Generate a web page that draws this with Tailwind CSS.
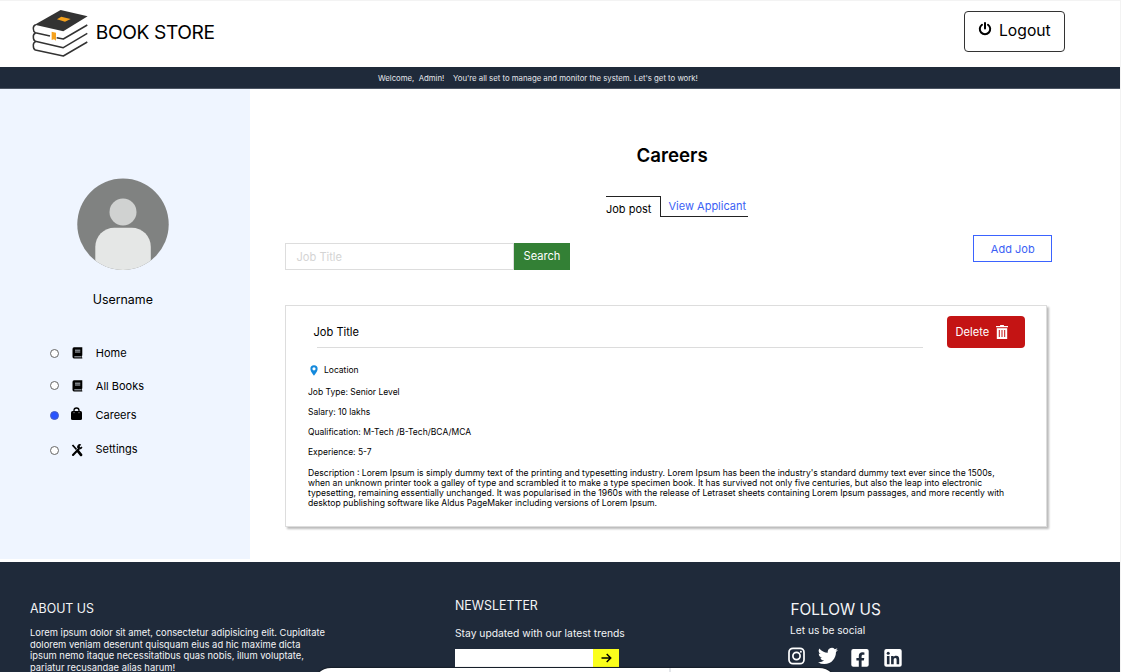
<!DOCTYPE html>
<html lang="en">
<head>
<meta charset="utf-8">
<title>Book Store</title>
<script src="https://cdn.jsdelivr.net/npm/@tailwindcss/browser@4"></script>
</head>
<body class="bg-white font-['Inter',sans-serif] text-black whitespace-nowrap overflow-hidden">
<div class="relative w-[1121px] h-[672px] overflow-hidden border-t border-r border-[#f3f3f3] flex flex-col">

  <header class="h-[66px] shrink-0 flex items-start justify-between pl-8 pr-[55.5px]">
    <div class="flex items-start">
      <svg class="mt-[7px] w-[57.3px] h-[50.7px]" viewBox="96 24 172 152" fill="none">
        <path d="M182 30L263 49L190 94L104 74Z" fill="#333"/>
        <path d="M184 50L212 57L195 65L171 58Z" fill="#f5a11c"/>
        <g stroke="#333" stroke-width="4.5" stroke-linejoin="round">
          <path d="M107 74Q99 77 100 86Q100 95 106 98L150 108M170 113L190 117L262 75"/>
          <path d="M107 99Q99 102 100 111Q100 121 106 124L190 143L262 100"/>
          <path d="M107 125Q99 128 100 137Q100 147 106 150L190 168L262 126"/>
        </g>
        <path d="M155 95L168 98V122L162 118L155 120Z" fill="#f5a11c"/>
      </svg>
      <h1 class="ml-[6.5px] mt-[19px] text-[19.2px] leading-6 tracking-[-0.4px]">BOOK STORE</h1>
    </div>
    <button class="mt-[10px] w-[100.5px] h-[41px] rounded-[4px] border border-[#333] flex items-start pl-[13px]">
      <svg class="mt-[10px] w-[14px] h-[14px]" viewBox="0 0 14 14" fill="none" stroke="#000" stroke-width="2" stroke-linecap="round"><path d="M7 1v5.5M4 2.8a5.2 5.2 0 1 0 6 0"/></svg>
      <span class="ml-[7px] mt-[9px] text-[15.7px] leading-5">Logout</span>
    </button>
  </header>

  <div class="h-[22px] shrink-0 bg-[#1f2a3a] border-b border-[#4c5563] pl-[378px] text-[7.78px] leading-[22px] text-gray-200 whitespace-pre">Welcome,  Admin!    You're all set to manage and monitor the system. Let's get to work!</div>

  <main class="h-[473px] shrink-0 flex">
    <aside class="w-[250px] h-[470px] bg-[#eff5ff]">
      <svg class="ml-[76.5px] mt-[89px] w-[92px] h-[92px]" viewBox="0 0 92 92">
        <defs><clipPath id="face"><circle cx="46" cy="46.3" r="45.7"/></clipPath></defs>
        <g clip-path="url(#face)"><rect width="92" height="92" fill="#808281"/><circle cx="46" cy="34" r="13.5" fill="#d0d2d1"/><rect x="18.3" y="49.8" width="55.5" height="70" rx="19" fill="#e5e7e6"/></g>
      </svg>
      <p class="ml-[92.7px] mt-[19.5px] text-[12.4px] leading-5">Username</p>
      <nav class="mt-[33.5px] text-[11px]">
        <div class="h-5 flex items-center pl-[50px]"><i class="w-[9px] h-[9px] rounded-full border border-[#666] bg-white"></i>
          <svg class="ml-[12.5px] w-[11px] h-[12px]" viewBox="0 0 11 12"><path d="M2 .3H10.3V8.5L9.7 9V10.5H10.3V11.5H2Q.5 11.5.5 9.7V2Q.5.3 2 .3Z"/><path d="M3 3.2H8.3M3 5H8.3M2.3 9.8H9" stroke="#cbd2dc" stroke-width=".9"/></svg>
          <span class="ml-[13.3px]">Home</span></div>
        <div class="mt-[12.5px] h-5 flex items-center pl-[50px]"><i class="w-[9px] h-[9px] rounded-full border border-[#666] bg-white"></i>
          <svg class="ml-[12.5px] w-[11px] h-[12px]" viewBox="0 0 11 12"><path d="M2 .3H10.3V8.5L9.7 9V10.5H10.3V11.5H2Q.5 11.5.5 9.7V2Q.5.3 2 .3Z"/><path d="M3 3.2H8.3M3 5H8.3M2.3 9.8H9" stroke="#cbd2dc" stroke-width=".9"/></svg>
          <span class="ml-[13.3px] mt-px">All Books</span></div>
        <div class="mt-[9.5px] h-5 flex items-center pl-[50px]"><i class="w-[9px] h-[9px] rounded-full border border-[#4a5fc0] bg-[#2954ff]"></i>
          <svg class="ml-[12px] mb-[3px] w-[11px] h-[13px]" viewBox="0 0 11 13"><rect y="4" width="11" height="9" rx="1.5"/><path d="M3 6V3.5a2.5 2.5 0 0 1 5 0V6" fill="none" stroke="#000" stroke-width="1.3"/><path d="M3 5v1.2M8 5v1.2" stroke="#bbb" stroke-width=".7"/></svg>
          <span class="ml-[13.5px]">Careers</span></div>
        <div class="mt-[14.5px] h-5 flex items-center pl-[50px]"><i class="mt-px w-[9px] h-[9px] rounded-full border border-[#666] bg-white"></i>
          <svg class="ml-[12px] w-[12px] h-[14px]" viewBox="0 0 12 14" fill="none" stroke="#000"><path d="M1.5 2L5.5 6.5" stroke-width="1.8"/><path d="M7 8.2L10 11.8" stroke-width="2.8" stroke-linecap="round"/><path d="M2 12L7.5 6.2" stroke-width="2.1" stroke-linecap="round"/><path d="M9.5 1.6A2.2 2.2 0 1 0 11 4L9.5 4.7L8.2 3.5Z" fill="#000"/></svg>
          <span class="ml-[12.5px] mb-px">Settings</span></div>
      </nav>
    </aside>

    <section class="w-[870px] pl-[35px]">
      <h2 class="mt-[54.5px] ml-[351.5px] text-[18.7px] leading-6 font-semibold">Careers</h2>
      <div class="mt-[28px] ml-[321px] h-[21px] flex text-[11px]">
        <span class="w-[54.5px] border-t border-r border-[#222] leading-[25px]">Job post</span>
        <span class="w-[87.5px] border-b border-[#222] pl-2 leading-[20px] text-[#3b5ff5]">View Applicant</span>
      </div>
      <div class="mt-[18.5px] flex items-start">
        <div class="mt-[8px] w-[229px] h-[26.5px] border border-[#ddd] pl-[10.5px] text-[11.1px] leading-[26px] text-[#d4d4d4]">Job Title</div>
        <button class="mt-[8px] w-[56px] h-[26.5px] bg-[#338035] text-white text-[11.1px] leading-[27.5px]">Search</button>
        <button class="ml-[403px] w-[78.5px] h-[27px] border border-[#3b63ff] text-[#3b5ff5] text-[11px] leading-[26.5px] pl-px">Add Job</button>
      </div>
      <article class="mt-[35.5px] w-[762px] h-[222px] border border-[#ddd] shadow-[1.5px_1.5px_2px_#bbb] text-[8.5px]">
        <div class="flex items-start pl-[27px] text-[11.1px]">
          <div class="w-[633.5px]"><h3 class="ml-[.5px] mt-[15px] leading-[22px]">Job Title</h3><div class="ml-[4px] mt-[4px] w-[606px] h-px bg-[#dcdcdc]"></div></div>
          <button class="mt-[10px] w-[78px] h-8 rounded-[4px] bg-[#c41414] text-white flex items-center pl-[9px]">Delete
            <svg class="ml-[7px] w-[12px] h-[14px]" viewBox="0 0 12 14" fill="#fff"><path d="M4 .5Q4 0 4.5 0h3Q8 0 8 .5V1h4v1.3H0V1H4Z"/><path d="M.8 3.2H11.2V14H.8Z"/><path d="M3.3 5v7M6 5v7M8.7 5v7" stroke="#c41414"/></svg>
          </button>
        </div>
        <div class="pl-[22px]">
          <p class="mt-[12px] h-5 flex items-center"><svg class="ml-[1.5px] w-[8px] h-[11px]" viewBox="0 0 8 11" fill="#1489dc"><path fill-rule="evenodd" d="M4 .3A3.6 3.6 0 0 0 .4 4C.4 6.6 4 10.7 4 10.7S7.6 6.6 7.6 4A3.6 3.6 0 0 0 4 .3M4 2.2a1.6 1.6 0 1 1 0 3.2a1.6 1.6 0 0 1 0-3.2"/></svg><span class="ml-[6.5px]">Location</span></p>
          <p class="mt-[1.5px] leading-5">Job Type: Senior Level</p>
          <p class="leading-[20.5px]">Salary: 10 lakhs</p>
          <p class="leading-5">Qualification: M-Tech /B-Tech/BCA/MCA</p>
          <p class="leading-5">Experience: 5-7</p>
          <p class="mt-[5.5px] text-[8.6px] leading-[10.2px]">Description : Lorem Ipsum is simply dummy text of the printing and typesetting industry. Lorem Ipsum has been the industry's standard dummy text ever since the 1500s,<br>when an unknown printer took a galley of type and scrambled it to make a type specimen book. It has survived not only five centuries, but also the leap into electronic<br>typesetting, remaining essentially unchanged. It was popularised in the 1960s with the release of Letraset sheets containing Lorem Ipsum passages, and more recently with<br>desktop publishing software like Aldus PageMaker including versions of Lorem Ipsum.</p>
        </div>
      </article>
    </section>
  </main>

  <footer class="h-[110px] shrink-0 bg-[#1f2a3a] flex pl-[30px] text-gray-100">
    <div class="w-[425px]">
      <h4 class="mt-[37px] text-[12.4px] leading-5">ABOUT US</h4>
      <p class="mt-[8px] text-[9.4px] leading-[11.7px]">Lorem ipsum dolor sit amet, consectetur adipisicing elit. Cupiditate<br>dolorem veniam deserunt quisquam eius ad hic maxime dicta<br>ipsum nemo itaque necessitatibus quas nobis, illum voluptate,<br>pariatur recusandae alias harum!</p>
    </div>
    <div class="w-[335px]">
      <h4 class="mt-[33.5px] text-[12.4px] leading-5">NEWSLETTER</h4>
      <p class="mt-[7px] text-[10.3px] leading-5">Stay updated with our latest trends</p>
      <div class="mt-[6.5px] flex h-[18px]"><div class="w-[138px] bg-white"></div><div class="w-[26px] bg-[#fbff1c] flex items-center justify-center"><svg class="w-[11px] h-[10px]" viewBox="0 0 11 10" fill="none" stroke="#000" stroke-width="1.5"><path d="M.5 5H9.5M5.7 1L9.7 5L5.7 9"/></svg></div></div>
    </div>
    <div>
      <h4 class="ml-[.5px] mt-[37px] text-[15.4px] leading-[22px]">FOLLOW US</h4>
      <p class="-mt-px mb-px text-[10.2px] leading-5">Let us be social</p>
      <div class="mt-[7px] flex items-start">
        <svg class="-ml-[2px] w-[17px] h-[18px]" viewBox="0 0 17 18" fill="none" stroke="#fff"><rect x="1" y="1.3" width="15" height="15.4" rx="4" stroke-width="1.7"/><circle cx="8.5" cy="9" r="3.6" stroke-width="1.7"/><circle cx="12.9" cy="4.7" r="1" fill="#fff" stroke="none"/></svg>
        <svg class="ml-[13px] w-[20px] h-[18px]" viewBox="0 1.8 24 20.5" fill="#fff"><path d="M23.95 4.57a10 10 0 0 1-2.82.77 4.96 4.96 0 0 0 2.16-2.72c-.95.55-2 .95-3.13 1.18a4.92 4.92 0 0 0-8.38 4.48C7.69 8.1 4.07 6.13 1.64 3.16a4.92 4.92 0 0 0 1.52 6.57 4.9 4.9 0 0 1-2.23-.61v.06a4.92 4.92 0 0 0 3.95 4.83 5 5 0 0 1-2.21.08 4.94 4.94 0 0 0 4.6 3.42A9.87 9.87 0 0 1 0 19.54a14 14 0 0 0 7.55 2.21c9.05 0 14-7.5 14-13.98 0-.21 0-.42-.02-.63a9.94 9.94 0 0 0 2.42-2.57"/></svg>
        <svg class="ml-[13px] mt-[2px] w-[18px] h-[18px]" viewBox="0 0 18 18"><rect x=".3" width="17.4" height="17.8" rx="2" fill="#fff"/><path d="M7.8 18V11.5H5.4V8.9H7.8V7C7.8 4.6 9.2 3.3 11.4 3.3L13.4 3.5V5.7H12.2C11 5.7 10.6 6.4 10.6 7.2V8.9H13.3L12.8 11.5H10.6V18Z" fill="#1f2a3a"/></svg>
        <svg class="ml-[15px] mt-[2px] w-[18px] h-[18px]" viewBox="0 0 18 18"><rect x=".3" width="17.4" height="17.8" rx="2" fill="#fff"/><g fill="#1f2a3a"><circle cx="4.2" cy="4.3" r="1.5"/><path d="M2.9 7H5.5V15.2H2.9ZM7.1 7H9.6V8.1C10.2 7.2 11 6.8 12.2 6.8C14.6 6.8 15.2 8.4 15.2 10.6V15.2H12.6V11.1C12.6 10 12.4 9.1 11.3 9.1C10.1 9.1 9.7 9.9 9.7 11.1V15.2H7.1Z"/></g></svg>
      </div>
    </div>
  </footer>

  <div class="absolute left-[313px] top-[667px] w-[524px] h-[40px] rounded-[18px] bg-white shadow-[0_0_2px_#000]"><div class="ml-[356px] w-[2px] h-full bg-gray-200"></div></div>
</div>
</body>
</html>
